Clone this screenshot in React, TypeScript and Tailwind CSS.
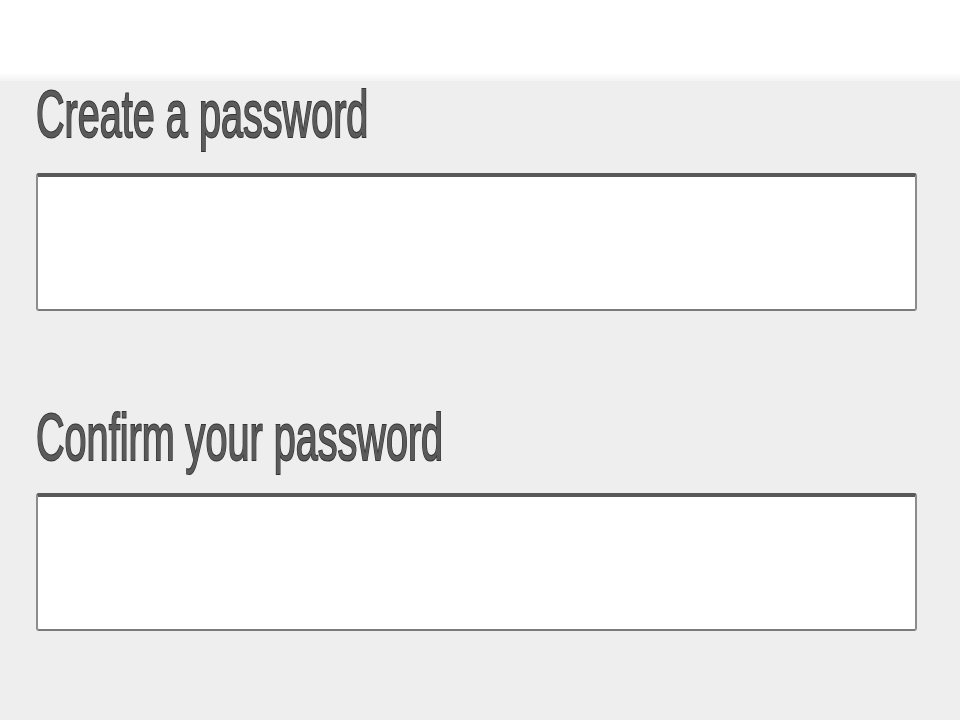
export default function App() {
  const label =
    "block origin-left scale-x-[0.6] whitespace-nowrap font-['Liberation_Sans',Arial,sans-serif] text-[66px] leading-[66px] text-[#5a5a5a] [-webkit-text-stroke:2px_#333333] [paint-order:stroke_fill]";
  const field =
    "block h-[138px] w-full rounded-[3px] border-x-2 border-t-4 border-b-2 border-x-[#8c8c8c] border-t-[#585858] border-b-[#7a7a7a] bg-white outline-none";

  return (
    <div className="h-[720px] w-[960px] overflow-hidden bg-[#eeeeee]">
      <div className="h-[81px] bg-gradient-to-b from-white from-90% to-[#f3f3f3]" />

      <div className="flex flex-col pl-[36px] pr-[43px]">
        <label className={label}>Create a password</label>
        <input type="password" className={`${field} mt-[26px]`} />

        <label className={`${label} mt-[93px]`}>Confirm your password</label>
        <input type="password" className={`${field} mt-[23px] h-[136px]`} />
      </div>
    </div>
  );
}
